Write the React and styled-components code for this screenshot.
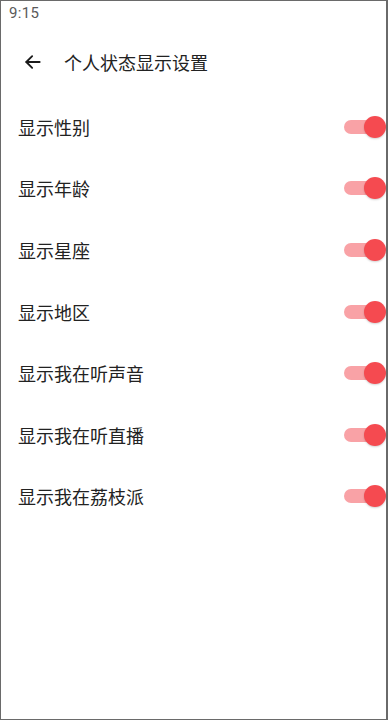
import React, { useState } from 'react';
import styled, { createGlobalStyle } from 'styled-components';

const GlobalStyle = createGlobalStyle`
  html, body { margin: 0; padding: 0; background: #fff; }
  body { font-family: Roboto, "Noto Sans CJK SC", sans-serif; }
`;

const Frame = styled.div`
  box-sizing: border-box;
  width: 388px;
  height: 720px;
  border: 1px solid #6a6a6a;
  border-right-width: 2px;
  background: #fff;
  overflow: hidden;
`;

const StatusBar = styled.div`
  height: 24px;
  padding-left: 8px;
  display: flex;
  align-items: center;
  font-size: 15px;
  color: #5a5a5a;
  letter-spacing: 0.3px;
`;

const Header = styled.div`
  height: 76px;
  display: flex;
  align-items: center;
  padding-left: 22px;
  margin-top: -1px;
`;

const Back = styled.button`
  border: 0;
  background: none;
  padding: 0;
  width: 20px;
  height: 20px;
  display: flex;
  color: #1a1a1a;
  margin-right: 21px;
`;

const Title = styled.h1`
  margin: 0;
  font-size: 18px;
  font-weight: 400;
  color: #222;
  font-family: "Noto Sans CJK SC", sans-serif;
`;

const List = styled.div`
  display: flex;
  flex-direction: column;
  margin-top: -4px;
`;

const Row = styled.div`
  height: 61.6px;
  display: flex;
  align-items: center;
  justify-content: space-between;
  padding-left: 17px;
`;

const Label = styled.span`
  font-size: 18px;
  color: #222;
  font-family: "Noto Sans CJK SC", sans-serif;
`;

const Switch = styled.div`
  position: relative;
  width: 42px;
  height: 22px;
  cursor: pointer;
`;

const Track = styled.div`
  position: absolute;
  left: 0;
  top: 4px;
  width: 34px;
  height: 14px;
  border-radius: 7px;
  background: ${p => (p.$on ? '#f9a2a6' : '#bdbdbd')};
`;

const Knob = styled.div`
  position: absolute;
  top: 0;
  left: ${p => (p.$on ? '20px' : '0')};
  width: 22px;
  height: 22px;
  border-radius: 50%;
  background: ${p => (p.$on ? '#f54a50' : '#f1f1f1')};
  box-shadow: 0 1px 2px rgba(0, 0, 0, 0.18);
`;

const items = ['显示性别', '显示年龄', '显示星座', '显示地区', '显示我在听声音', '显示我在听直播', '显示我在荔枝派'];

export default function App() {
  const [on, setOn] = useState(items.map(() => true));
  return (
    <Frame>
      <GlobalStyle />
      <StatusBar>9:15</StatusBar>
      <Header>
        <Back aria-label="back">
          <svg width="20" height="20" viewBox="0 0 24 24" fill="none" stroke="currentColor" strokeWidth="2.2" strokeLinecap="round" strokeLinejoin="round">
            <path d="M20 12H4" />
            <path d="M11 5l-7 7 7 7" />
          </svg>
        </Back>
        <Title>个人状态显示设置</Title>
      </Header>
      <List>
        {items.map((t, i) => (
          <Row key={t}>
            <Label>{t}</Label>
            <Switch onClick={() => setOn(on.map((v, j) => (j === i ? !v : v)))}>
              <Track $on={on[i]} />
              <Knob $on={on[i]} />
            </Switch>
          </Row>
        ))}
      </List>
    </Frame>
  );
}
